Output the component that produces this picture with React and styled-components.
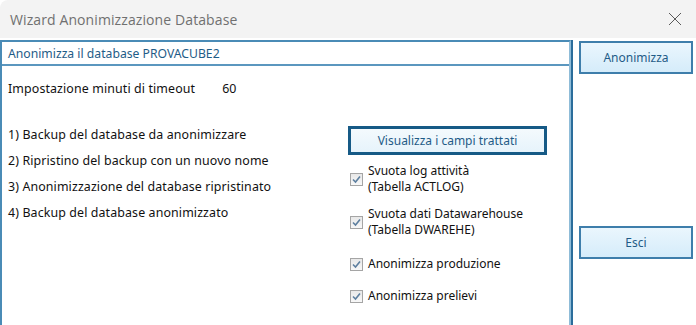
import React from "react";
import styled, { createGlobalStyle } from "styled-components";

const Global = createGlobalStyle`
  html, body { margin: 0; padding: 0; background: #ffffff; }
  body { font-family: "Noto Sans", "Liberation Sans", Arial, sans-serif; }
`;

const Window = styled.div`
  width: 696px;
  height: 325px;
  display: flex;
  flex-direction: column;
  background: #ffffff;
  overflow: hidden;
  border-top-left-radius: 8px;
`;

const TitleBar = styled.div`
  height: 38px;
  flex: 0 0 38px;
  background: #f3f3f3;
  display: flex;
  align-items: center;
  justify-content: space-between;
  padding: 0 0 0 10px;
  box-sizing: border-box;
`;

const Title = styled.span`
  font-family: "Open Sans", "Noto Sans", sans-serif;
  font-size: 14px;
  color: #707070;
  letter-spacing: 0.1px;
`;

const Close = styled.div`
  width: 46px;
  height: 38px;
  display: flex;
  align-items: center;
  justify-content: center;
  margin-right: -2px;
`;

const Body = styled.div`
  flex: 1;
  display: flex;
  padding-top: 2px;
  background: #ffffff;
`;

const LeftPanel = styled.div`
  width: 567px;
  flex: 0 0 567px;
  border: 2px solid #4a8bb6;
  border-bottom: none;
  border-right: 2px solid #8fbcd8;
  display: flex;
  flex-direction: column;
`;

const Header = styled.div`
  height: 22px;
  border-bottom: 2px solid #5b97bf;
  display: flex;
  align-items: center;
  padding-left: 6px;
  font-size: 12.2px;
  color: #1f5c87;
`;

const Content = styled.div`
  flex: 1;
  display: flex;
  padding: 16px 0 0 6px;
`;

const LeftCol = styled.div`
  width: 340px;
  display: flex;
  flex-direction: column;
`;

const Label = styled.div`
  font-size: 12.4px;
  letter-spacing: 0.12px;
  color: #111111;
  height: 14px;
  line-height: 14px;
  display: flex;
`;

const Value = styled.span`
  margin-left: 27px;
`;

const Steps = styled.div`
  display: flex;
  flex-direction: column;
  gap: 12px;
  margin-top: 32px;
`;

const RightCol = styled.div`
  display: flex;
  flex-direction: column;
  padding-top: 44px;
`;

const BigButton = styled.button`
  width: 199px;
  height: 29px;
  box-sizing: border-box;
  border: 3px solid #165a86;
  background: linear-gradient(#f4fafd, #e6f3fb);
  color: #1f5c87;
  font-family: "Noto Sans", "Liberation Sans", Arial, sans-serif;
  font-size: 12px;
  padding: 0;
  display: flex;
  align-items: center;
  justify-content: center;
`;

const Checks = styled.div`
  display: flex;
  flex-direction: column;
  margin-top: 2px;
`;

const CheckRow = styled.div`
  display: flex;
  align-items: center;
  gap: 5px;
  height: ${(p) => p.$h}px;
`;

const Box = styled.span`
  width: 13px;
  height: 13px;
  box-sizing: border-box;
  border: 1px solid #a5a5a5;
  background: linear-gradient(#e8e8e8, #f8f8f8);
  display: flex;
  align-items: center;
  justify-content: center;
  margin-left: 2px;
  flex: 0 0 13px;
`;

const CheckText = styled.div`
  font-size: 12px;
  color: #111111;
  line-height: 16px;
`;

const RightPanel = styled.div`
  flex: 1;
  border-left: 2px solid #2b6d9b;
  display: flex;
  flex-direction: column;
  padding: 1px 3px 0 6px;
`;

const SideButton = styled.button`
  height: 33px;
  box-sizing: border-box;
  border: 2px solid #3e7eab;
  background: linear-gradient(#eaf6fd, #d5ecfa);
  color: #1f5c87;
  font-family: "Noto Sans", "Liberation Sans", Arial, sans-serif;
  font-size: 12px;
  padding: 0;
  margin-top: ${(p) => p.$mt || 0}px;
`;

const Check = () => (
  <Box>
    <svg width="9" height="9" viewBox="0 0 9 9">
      <path d="M1 4.5 L3.5 7 L8 1.5" fill="none" stroke="#5d7f9f" strokeWidth="1.6" />
    </svg>
  </Box>
);

const steps = [
  "1) Backup del database da anonimizzare",
  "2) Ripristino del backup con un nuovo nome",
  "3) Anonimizzazione del database ripristinato",
  "4) Backup del database anonimizzato",
];

const checks = [
  { lines: ["Svuota log attività", "(Tabella ACTLOG)"], h: 44 },
  { lines: ["Svuota dati Datawarehouse", "(Tabella DWAREHE)"], h: 42 },
  { lines: ["Anonimizza produzione"], h: 42 },
  { lines: ["Anonimizza prelievi"], h: 22 },
];

export default function App() {
  return (
    <>
      <Global />
      <Window>
        <TitleBar>
          <Title>Wizard Anonimizzazione Database</Title>
          <Close>
            <svg width="14" height="14" viewBox="0 0 14 14">
              <path d="M1 1 L13 13 M13 1 L1 13" stroke="#5a5a5a" strokeWidth="1" />
            </svg>
          </Close>
        </TitleBar>
        <Body>
          <LeftPanel>
            <Header>Anonimizza il database PROVACUBE2</Header>
            <Content>
              <LeftCol>
                <Label>
                  Impostazione minuti di timeout<Value>60</Value>
                </Label>
                <Steps>
                  {steps.map((s) => (
                    <Label key={s}>{s}</Label>
                  ))}
                </Steps>
              </LeftCol>
              <RightCol>
                <BigButton>Visualizza i campi trattati</BigButton>
                <Checks>
                  {checks.map((c) => (
                    <CheckRow key={c.lines[0]} $h={c.h}>
                      <Check />
                      <CheckText>
                        {c.lines.map((l) => (
                          <div key={l}>{l}</div>
                        ))}
                      </CheckText>
                    </CheckRow>
                  ))}
                </Checks>
              </RightCol>
            </Content>
          </LeftPanel>
          <RightPanel>
            <SideButton>Anonimizza</SideButton>
            <SideButton $mt={152}>Esci</SideButton>
          </RightPanel>
        </Body>
      </Window>
    </>
  );
}
